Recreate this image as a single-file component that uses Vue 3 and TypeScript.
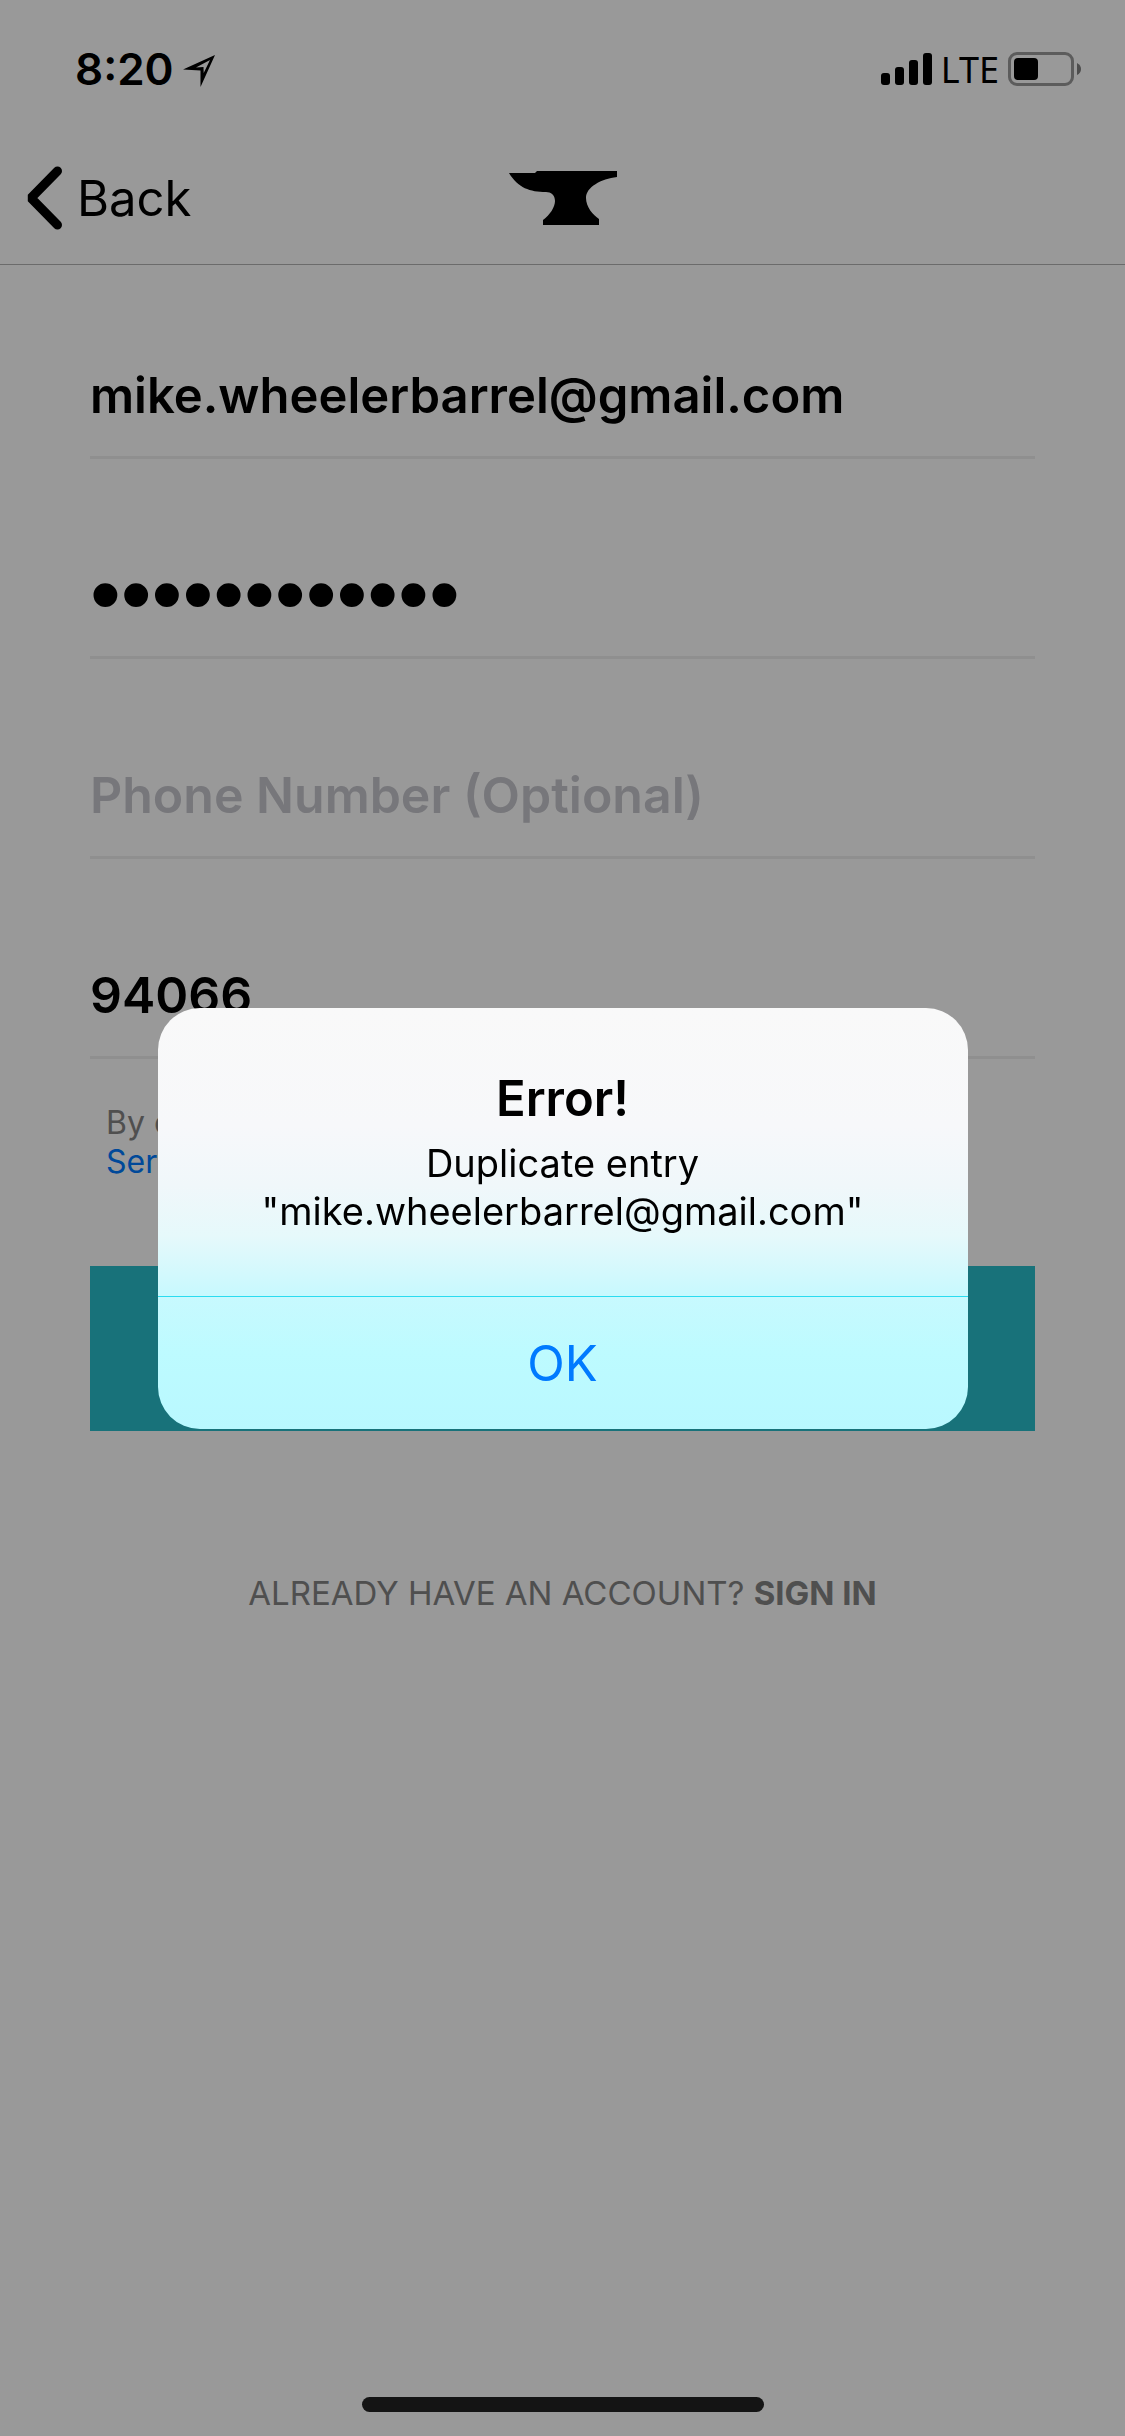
<script setup lang="ts">
import { ref } from 'vue'

const email = ref('mike.wheelerbarrel@gmail.com')
const password = ref('hawkinslab83')
const phone = ref('')
const zip = ref('94066')
const alertOpen = ref(true)
</script>

<template>
  <div class="screen">
    <header class="status">
      <div class="status-left">
        <span class="time">8:20</span>
        <svg class="location" viewBox="0 -4 32 36" aria-hidden="true">
          <path fill-rule="evenodd" d="M32 0 L17.500 32 V15.500 L0 14.500 Z M27 5 L13 12.500 L20.500 12 L20.700 18 Z" />
        </svg>
      </div>
      <div class="status-right">
        <svg class="signal" viewBox="0 0 51 32" aria-hidden="true">
          <rect x="0" y="20" width="9" height="12" rx="3" />
          <rect x="14" y="14" width="9" height="18" rx="3" />
          <rect x="28" y="7" width="9" height="25" rx="3" />
          <rect x="42" y="0" width="9" height="32" rx="3" />
        </svg>
        <span class="carrier">LTE</span>
        <svg class="battery" viewBox="0 0 73 34" aria-hidden="true">
          <rect x="1.5" y="1.5" width="63" height="31" rx="7.5" fill="none" stroke="#999" stroke-width="3" />
          <rect x="6" y="6" width="24" height="22" rx="4" />
          <path d="M69 11 Q73 13 73 17 T69 23 Z" fill="#808080" />
        </svg>
      </div>
    </header>

    <nav class="nav">
      <a class="back" href="#back">
        <svg class="chevron" viewBox="0 0 36 64" aria-hidden="true">
          <path d="M31.5 5 L5 32 L31.5 59" fill="none" stroke="#000" stroke-width="9" stroke-linecap="round" stroke-linejoin="bevel" />
        </svg>
        <span>Back</span>
      </a>
      <svg class="logo" viewBox="0 0 108 54" role="img" aria-label="Anvil">
        <path d="M0 2 H26 L28 0 H108 V6 C92 8 77 16 77 27 C77 36 84 44 90 48 V54 H34 V49 C41 44 46 36 46 30 C46 24 42 21 37 21 C21 21 9 17 0 2 Z" />
      </svg>
    </nav>

    <main class="content">
      <form class="form" @submit.prevent="alertOpen = true">
        <input v-model="email" class="field email" type="email" aria-label="Email" />
        <input v-model="password" class="field password" type="password" aria-label="Password" />
        <input v-model="phone" class="field" type="tel" aria-label="Phone number" placeholder="Phone Number (Optional)" />
        <input v-model="zip" class="field" type="text" aria-label="Zip code" />
        <p class="terms">
          By continuing you accept<br />
          <a href="#terms">Service Terms</a>
        </p>
        <button class="submit" type="submit" aria-label="Sign up"></button>
      </form>
      <p class="signin">ALREADY HAVE AN ACCOUNT? <a href="#signin">SIGN IN</a></p>
    </main>

    <div class="home"></div>

    <div v-if="alertOpen" class="backdrop">
      <section class="alert" role="alertdialog" aria-labelledby="alert-title" aria-describedby="alert-text">
        <div class="alert-body">
          <h1 id="alert-title">Error!</h1>
          <p id="alert-text">Duplicate entry<br />"mike.wheelerbarrel@gmail.com"</p>
        </div>
        <button class="ok" type="button" @click="alertOpen = false">OK</button>
      </section>
    </div>
  </div>
</template>

<style>
body {
  margin: 0;
  background: #fff;
}
</style>

<style scoped>
.screen {
  box-sizing: border-box;
  display: flex;
  flex-direction: column;
  min-height: 100vh;
  padding-bottom: 24px;
  background: #fff;
  color: #000;
  font-family: Inter, "Liberation Sans", sans-serif;
}

.status {
  display: flex;
  align-items: center;
  justify-content: space-between;
  height: 138px;
  padding: 0 44px 0 75px;
}

.status-left,
.status-right {
  display: flex;
  align-items: center;
}

.status-left {
  gap: 9px;
}

.status-right {
  gap: 9px;
}

.time {
  font-size: 44px;
  font-weight: 600;
}

.location {
  width: 32px;
  height: 36px;
}

.signal {
  width: 51px;
  height: 32px;
}

.carrier {
  font-family: "Noto Sans", sans-serif;
  font-size: 36px;
}

.battery {
  width: 73px;
  height: 34px;
}

.nav {
  box-sizing: border-box;
  display: grid;
  grid-template-columns: 1fr auto 1fr;
  align-items: center;
  height: 127px;
  padding: 0 26px 6px;
  border-bottom: 1px solid #b2b2b2;
}

.back {
  display: flex;
  align-items: center;
  gap: 15px;
  color: #000;
  font-size: 49px;
  text-decoration: none;
}

.chevron {
  width: 36px;
  height: 64px;
}

.logo {
  width: 108px;
  height: 54px;
}

.content {
  flex: 1;
  padding: 0 90px;
}

.form {
  display: flex;
  flex-direction: column;
  padding-top: 74px;
}

.field {
  box-sizing: border-box;
  width: 100%;
  height: 120px;
  margin-bottom: 80px;
  padding: 0 0 6px;
  border: 0;
  border-bottom: 3px solid #eee;
  border-radius: 0;
  outline: 0;
  background: none;
  color: #000;
  font: 600 50px Inter, "Liberation Sans", sans-serif;
}

.field::placeholder {
  color: #c7c7cd;
  opacity: 1;
}

.email {
  padding-bottom: 4px;
  font-size: 49px;
}

.password {
  padding-bottom: 8px;
  font: 400 88px "Liberation Sans", sans-serif;
}

.terms {
  margin: -36px 0 0;
  padding: 0 16px;
  color: #848484;
  font-size: 32px;
  line-height: 39px;
}

.terms a {
  color: #007aff;
  text-decoration: none;
}

.submit {
  height: 165px;
  margin-top: 85px;
  border: 0;
  background: #28bfcc;
}

.signin {
  margin: 142px 0 0;
  color: #848484;
  font-size: 33px;
  line-height: 40px;
  text-align: center;
}

.signin a {
  color: inherit;
  font-weight: 700;
  text-decoration: none;
}

.home {
  align-self: center;
  width: 402px;
  height: 15px;
  border-radius: 8px;
  background: #222;
}

.backdrop {
  position: fixed;
  inset: 0;
  display: flex;
  align-items: center;
  justify-content: center;
  background: rgba(0, 0, 0, 0.4);
}

.alert {
  width: 72%;
  overflow: hidden;
  border-radius: 42px;
  background: linear-gradient(#f9f9f9 0%, #f7f8fa 28%, #f0f7fa 42%, #e6f9fb 54%, #c8f9fe 68%, #bdfbff 82%, #b9f8ff 100%);
  text-align: center;
}

.alert-body {
  padding: 61px 48px;
  border-bottom: 1px solid #2adcf0;
}

.alert h1 {
  margin: 0;
  font-size: 49px;
  font-weight: 600;
  line-height: 60px;
}

.alert p {
  margin: 10px 0 0;
  font-size: 38px;
  line-height: 48px;
}

.ok {
  display: block;
  width: 100%;
  height: 132px;
  padding: 2px 0 0;
  border: 0;
  background: none;
  color: #007aff;
  font: 400 49px Inter, "Liberation Sans", sans-serif;
}
</style>
